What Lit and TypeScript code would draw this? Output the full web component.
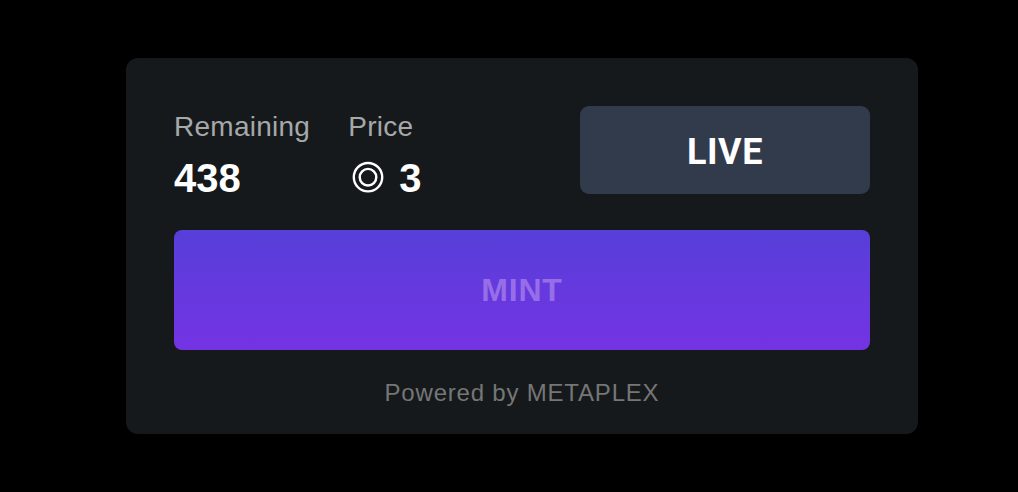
import { html, css, svg, LitElement } from 'lit';
import { customElement, property } from 'lit/decorators.js';

@customElement('mint-stat')
export class MintStat extends LitElement {
  static styles = css`
    :host {
      display: block;
    }

    .label {
      padding-top: 1px;
      font-size: 28px;
      line-height: 40px;
      color: #a6a8a9;
      letter-spacing: 0.26px;
    }

    .value {
      display: flex;
      align-items: center;
      height: 63px;
      font-size: 40px;
      font-weight: bold;
      color: #fff;
    }

    .coin {
      width: 32px;
      height: 32px;
      margin: 0 15px 3px 4px;
    }
  `;

  @property() label = '';

  @property({ type: Number }) value = 0;

  @property({ type: Boolean }) coin = false;

  render() {
    return html`
      <div class="label">${this.label}</div>
      <div class="value">
        ${this.coin ? this.renderCoin() : ''}
        <span>${this.value}</span>
      </div>
    `;
  }

  renderCoin() {
    return html`
      <svg class="coin" viewBox="0 0 32 32" fill="none" stroke="#fff" stroke-width="2.4">
        ${[14.2, 8.3].map(r => svg`<circle cx="16" cy="16.2" r=${r} />`)}
      </svg>
    `;
  }
}

@customElement('app-root')
export class AppRoot extends LitElement {
  static styles = css`
    :host {
      display: block;
      box-sizing: border-box;
      height: 492px;
      padding: 58px 100px 58px 126px;
      background: #000;
      font-family: 'Liberation Sans', Arial, sans-serif;
    }

    .card {
      box-sizing: border-box;
      height: 376px;
      padding: 48px;
      border-radius: 12px;
      background: #16191b;
    }

    .header {
      display: flex;
      height: 124px;
    }

    .price {
      margin-left: 38px;
    }

    .status {
      display: flex;
      box-sizing: border-box;
      align-items: center;
      justify-content: center;
      width: 290px;
      height: 88px;
      margin-left: auto;
      padding-top: 3px;
      border-radius: 9px;
      background: #323b4c;
      color: #fff;
      font-family: Roboto, sans-serif;
      font-size: 36px;
      font-weight: bold;
      letter-spacing: 0.5px;
    }

    .mint {
      display: block;
      width: 100%;
      height: 120px;
      padding: 0;
      border: 0;
      border-radius: 8px;
      background: linear-gradient(180deg, #573fd9, #7433e3);
      color: #966fe8;
      font: bold 32px 'Liberation Sans', Arial, sans-serif;
      letter-spacing: 0.8px;
    }

    .footer {
      margin-top: 24px;
      color: #747677;
      font-size: 24px;
      line-height: 38px;
      letter-spacing: 0.8px;
      text-align: center;
    }
  `;

  @property({ type: Number }) remaining = 438;

  @property({ type: Number }) price = 3;

  render() {
    return html`
      <div class="card">
        <div class="header">
          <mint-stat label="Remaining" .value=${this.remaining}></mint-stat>
          <mint-stat class="price" label="Price" .value=${this.price} coin></mint-stat>
          <div class="status">LIVE</div>
        </div>
        <button class="mint" disabled>MINT</button>
        <div class="footer">Powered by METAPLEX</div>
      </div>
    `;
  }
}
